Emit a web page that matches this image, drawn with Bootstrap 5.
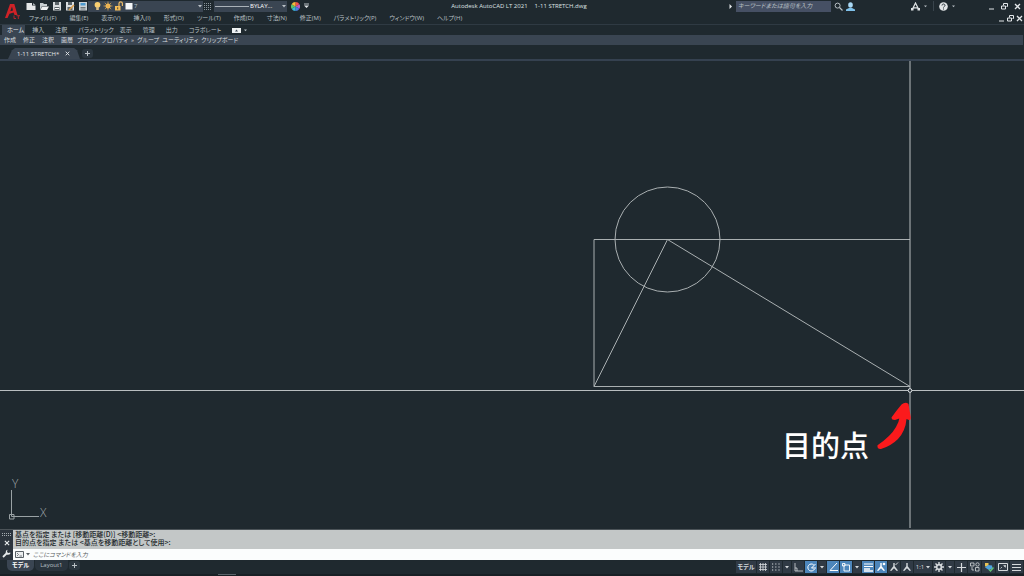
<!DOCTYPE html>
<html lang="ja">
<head>
<meta charset="utf-8">
<meta name="viewport" content="width=device-width, initial-scale=1">
<title>Autodesk AutoCAD LT 2021 - 1-11 STRETCH.dwg</title>
<link href="https://cdn.jsdelivr.net/npm/bootstrap@5.3.0/dist/css/bootstrap.min.css" rel="stylesheet">
<style>
:root{--bg:#1f292f;--panel:#3a4552;--txt:#b9c0c5;--hi:#e3e7ea;--blue:#4d86bb}
body{background:var(--bg);color:var(--txt);font:6px/8px "Open Sans","Noto Sans CJK JP",sans-serif;font-feature-settings:"palt";overflow-x:hidden}
button,input,select{font:inherit;font-feature-settings:inherit;color:inherit;border:0;background:none;padding:0;margin:0;white-space:nowrap}
a{color:inherit;text-decoration:none;white-space:nowrap}
svg{display:block;flex:none}
button{display:flex;align-items:center;justify-content:center}
.ln{fill:none;stroke:currentColor}
.gap-s{gap:3px}
.gap-xs{gap:1px}
.logo{width:24px}
.bar{height:12px}
.quick{padding-left:2px}
.menus{gap:13px;padding-left:5px}
.combo{background:var(--panel);height:11px;padding-left:1px}
.combo select{appearance:none;outline:0}
.pick-layer{width:63px}
.pick-type{width:31px}
.hatch{margin:0 2px 0 1px}
.doc-title{gap:7px;color:#dfe3e5}
.search{background:#465064;width:95px;height:11px;padding:0 2px;margin-left:3px;font-style:italic}
.search::placeholder,.cmd-in::placeholder{color:inherit;opacity:1}
.acct{padding:0 4px 0 3px}
.apps{gap:4px;padding-left:4px}
.win{gap:6px;padding:0 3px 0 33px;color:var(--hi)}
.win-doc{gap:2px;padding-right:1px;color:var(--hi)}
.rib{height:11px;gap:11px;border-top:1px solid #2f3a43;padding-left:2px}
.rib .home{background:var(--panel);color:var(--hi);padding:1px 1px 1px 5px;margin-right:-4px}
.rib .long{margin-right:-5px}
.pan{height:10px;gap:4px;background:var(--panel);color:#d3d8dc;padding-left:4px;margin-right:1px}
.pan .wide{gap:7px}
.files{height:14px}
.ftab{margin:3px 2px 0 8px;width:72px;height:11px;padding-left:9px;gap:6px;background:var(--panel);color:var(--hi);clip-path:polygon(0 100%,4px 20%,7px 0,66px 0,69px 20%,100% 100%)}
.plus{width:11px;height:9px;background:#2c3740;border-radius:3px}
.files .plus{margin-top:3px}
.rule{height:2px;background:#354150}
.stage{min-height:200px}
.stage svg{width:100%;height:100%}
.cmd{background:#2c343d;border-top:1px solid #4b5358}
.cmd-side{width:13px;color:#e8ebed;padding:3px 0 2px}
.hist{background:#c3c7c7;color:#22282b;font-size:7px;font-weight:500;line-height:8px;padding:0 2px 3px;font-family:"Noto Sans CJK JP",sans-serif}
.entry{background:#fbfdfd;color:#555c60;height:11px;padding-left:2px;gap:3px}
.cmd-in{font-style:italic;outline:0}
.recent{gap:2px}
.status{height:14px}
.layouts{padding:0 0 3px 7px;gap:1px}
.ltab{height:11px;line-height:11px;padding:0 5px;border-radius:0 0 5px 5px;background:#2a343d}
.ltab.act{background:var(--panel);color:#fff;font-weight:600}
.tray{gap:1px;padding-right:1px;color:#d5d9dc}
.tray button{width:12px;height:12px;background:#303a45}
.tray .car{width:8px}
.tray .wd{width:13px}
.tray .t18{width:18px;gap:2px}
.tray .t20{width:20px;font-weight:600}
.tray .on{background:var(--blue);color:#fff}
.foot{height:2px;background:#182025;padding-left:218px}
.foot i{display:block;width:18px;height:1px;background:#59636a}
</style>
</head>
<body>
<svg width="0" height="0" class="position-absolute" aria-hidden="true">
  <symbol id="car" viewBox="0 0 4 3"><path d="M0 0h4L2 2.6z" fill="currentColor"/></symbol>
  <symbol id="min" viewBox="0 0 7 7"><path class="ln" d="M1 6h5"/></symbol>
  <symbol id="rest" viewBox="0 0 7 7"><path class="ln" d="M2.500 2.500v-2h4v3h-1M.5 3h4v3h-4z"/></symbol>
  <symbol id="cls" viewBox="0 0 7 7"><path class="ln" stroke-width="1.300" d="M1 1l5 5M6 1L1 6"/></symbol>
  <symbol id="man" viewBox="0 0 10 10"><path d="M4.300 1h1.400v3.200L9 8.600 7.800 9 5 6.200 2.200 9 1 8.600l3.300-4.400z" fill="currentColor"/></symbol>
</svg>
<div class="d-flex flex-column min-vh-100">
<header>
  <div class="d-flex">
    <button class="logo" aria-label="アプリケーション メニュー"><svg width="20" height="22" viewBox="0 0 20 22"><path d="M3 17L8 3h4.300l3.200 11h-3L11.600 11.500 7.500 12.800 5.500 17zM8.300 10.300l2.700-.9L10 5.500z" fill="#cf2227"/><path d="M12 14.500v3h2M14.500 14.700h3.500M16.300 14.700V18" stroke="#b3262b" fill="none"/></svg></button>
    <div class="flex-grow-1">
      <div class="bar d-flex align-items-center">
        <div class="quick d-flex align-items-center gap-s">
          <button aria-label="新規"><svg width="10" height="10"><path d="M.5 2h5.500v2.500H9.500V9h-9z" fill="#e5e8e9"/><path d="M7 2l2.500 2H7z" fill="#aab1b5"/></svg></button>
          <button aria-label="開く"><svg width="10" height="10"><path d="M1 2h3l1 1h3v2H3L1 9z" fill="#c9cfd2"/><path d="M3 5.500h7L8 9H1.500z" fill="#f0f2f3"/></svg></button>
          <button aria-label="上書き保存"><svg width="10" height="10"><path d="M1 1h8v8.500H1z" fill="#d9dddf"/><path d="M3 1h4v3H3zM2.500 6h5v3h-5z" fill="#5b6469"/><path d="M3 7.500h4" stroke="#fff"/></svg></button>
          <button aria-label="名前を付けて保存"><svg width="10" height="10"><path d="M1 1h8v8.500H1z" fill="#d9dddf"/><path d="M3 1h4v3H3zM2.500 6h5v3h-5z" fill="#5b6469"/><path d="M4 9l5-5" stroke="#e0a04c" stroke-width="1.600"/></svg></button>
          <button aria-label="印刷"><svg width="10" height="10"><path d="M1 1h8v8.500H1z" fill="#cdd3d6"/><path d="M2.500 2h5v2.500h-5z" fill="#4e9bd0"/><path d="M2.500 6.500h5M2.500 8h5" stroke="#6d767b"/></svg></button>
        </div>
        <div class="combo d-flex align-items-center gap-xs" >
          <svg class="ms-1" width="9" height="10"><circle cx="4.500" cy="3.800" r="2.900" fill="#f9cf70"/><path d="M3.200 6h2.600v3H3.200z" fill="#d8bd86"/></svg>
          <svg width="10" height="10"><circle cx="5" cy="5" r="2.500" fill="#f6bf58"/><path d="M5 .5v9M.5 5h9M1.800 1.800l6.400 6.400M8.200 1.800L1.800 8.200" stroke="#e5ad52" stroke-width=".7"/></svg>
          <svg width="10" height="10"><path d="M1 5h5.500v4.500H1z" fill="#f4bd57"/><path d="M5 5V2.500a1.700 1.700 0 0 1 3.400 0V5" fill="none" stroke="#efbd66" stroke-width="1.200"/><path d="M3.700 6.300v2" stroke="#4b4a3f"/></svg>
          <svg width="8" height="8"><path d="M.5 1h7v6.500h-7z" fill="#f5f7f8"/></svg>
          <select class="pick-layer" aria-label="画層"><option>7</option></select>
          <svg width="5" height="3"><use href="#car" width="4" height="3"/></svg>
        </div>
        <svg class="hatch" width="8" height="9"><path d="M0 1.500h8M0 3.500h8M0 5.500h8M0 7.500h8" stroke="#89949b" stroke-dasharray="1 1"/></svg>
        <div class="combo d-flex align-items-center gap-xs">
          <svg width="34" height="3"><path d="M0 1.500h34" stroke="#aab2b8"/></svg>
          <select aria-label="線種" class="pick-type text-white"><option>BYLAY...</option></select>
          <svg width="5" height="3"><use href="#car" width="4" height="3"/></svg>
        </div>
        <button class="ms-1" aria-label="色"><svg width="9" height="9" viewBox="0 0 8 8"><path d="M4 4V0a4 4 0 0 1 3.500 2z" fill="#f0504b"/><path d="M4 4l3.500-2a4 4 0 0 1 0 4z" fill="#b45ac8"/><path d="M4 4l3.500 2A4 4 0 0 1 4 8z" fill="#4b7be0"/><path d="M4 4v4A4 4 0 0 1 .5 6z" fill="#37b7d8"/><path d="M4 4L.5 6a4 4 0 0 1 0-4z" fill="#59c26c"/><path d="M4 4L.5 2A4 4 0 0 1 4 0z" fill="#f5b83c"/></svg></button>
        <button class="ms-1" aria-label="カスタマイズ"><svg width="5" height="6" viewBox="0 0 5 6"><path d="M0 1h5" stroke="currentColor"/><path d="M0 2.500h5L2.500 5z" fill="#e3e7ea"/></svg></button>
        <div class="doc-title flex-grow-1 d-flex justify-content-center text-nowrap"><span>Autodesk AutoCAD LT 2021</span><span>1-11 STRETCH.dwg</span></div>
        <svg width="4" height="5"><path d="M.5 0L3 2.500.5 5z" fill="#e3e7ea"/></svg>
        <input class="search" placeholder="キーワードまたは語句を入力" aria-label="検索">
        <div class="acct d-flex align-items-center gap-s">
          <button aria-label="検索する"><svg width="9" height="9"><circle class="ln" cx="3.600" cy="3.600" r="2.500"/><path class="ln" d="M5.500 5.500l3 3" stroke-width="1.200"/></svg></button>
          <button aria-label="サインイン"><svg width="9" height="9"><ellipse cx="4.500" cy="3" rx="2.300" ry="2.800" fill="#a9d8f5"/><path d="M0 9V7.500l3-1.500h3l3 1.500V9z" fill="#7fc1ea"/></svg></button>
        </div>
        <div class="apps d-flex align-items-center ms-5">
          <button aria-label="App Store"><svg width="9" height="9"><path d="M1.500 7l3-6 3 6M2.500 5.800h4" fill="none" stroke="#dfe3e5" stroke-width="1.200"/><path d="M0 6h2.500v2.500H0zM6.500 6H9v2.500H6.500z" fill="#dfe3e5"/></svg></button>
          <svg width="3" height="3"><use href="#car" width="3" height="3"/></svg>
          <svg width="4" height="10"><path d="M2.500 0v10" stroke="#39444c"/></svg>
          <button aria-label="ヘルプ"><svg width="9" height="9"><circle cx="4.500" cy="4.500" r="4.300" fill="#e1e5e7"/><path d="M3 3.500c0-2 3-2 3 0 0 1-1.500 1-1.500 2M4.500 6.500v1" fill="none" stroke="#28323a"/></svg></button>
          <svg width="3" height="3"><use href="#car" width="3" height="3"/></svg>
        </div>
        <div class="win d-flex">
          <button aria-label="最小化"><svg width="7" height="7"><use href="#min"/></svg></button>
          <button aria-label="元に戻す"><svg width="7" height="7"><use href="#rest"/></svg></button>
          <button aria-label="閉じる"><svg width="7" height="7"><use href="#cls"/></svg></button>
        </div>
      </div>
      <div class="bar d-flex align-items-center">
        <nav class="menus d-flex">
          <a href="#">ファイル(F)</a><a href="#">編集(E)</a><a href="#">表示(V)</a><a href="#">挿入(I)</a><a href="#">形式(O)</a><a href="#">ツール(T)</a><a href="#">作成(D)</a><a href="#">寸法(N)</a><a href="#">修正(M)</a><a href="#">パラメトリック(P)</a><a href="#">ウィンドウ(W)</a><a href="#">ヘルプ(H)</a>
        </nav>
        <div class="win-doc d-flex ms-auto">
          <button aria-label="図面を最小化"><svg width="7" height="7"><use href="#min"/></svg></button>
          <button aria-label="図面を元に戻す"><svg width="7" height="7"><use href="#rest"/></svg></button>
          <button aria-label="図面を閉じる"><svg width="7" height="7"><use href="#cls"/></svg></button>
        </div>
      </div>
    </div>
  </div>
  <nav class="rib d-flex align-items-center">
    <a class="home" href="#">ホーム</a><a href="#">挿入</a><a href="#">注釈</a><a class="long" href="#">パラメトリック</a><a href="#">表示</a><a href="#">管理</a><a href="#">出力</a><a href="#">コラボレート</a>
    <button class="gap-s" aria-label="リボンを最小化"><svg width="9" height="5"><path d="M0 0h9v5H0z" fill="#eef1f2"/><path d="M3 3.500h3L4.500 1.500z" fill="#3a4552"/></svg><svg width="3" height="3"><use href="#car" width="3" height="3"/></svg></button>
  </nav>
  <div class="pan d-flex align-items-center">
    <div class="wide d-flex"><button>作成</button><button>修正</button><button>注釈</button><button>画層</button></div>
    <div class="d-flex gap-s"><button>ブロック</button><button class="gap-s">プロパティ<span>»</span></button><button>グループ</button><button>ユーティリティ</button><button>クリップボード</button></div>
  </div>
  <div class="files d-flex align-items-center">
    <a class="ftab d-flex align-items-center" href="#">1-11 STRETCH*<svg width="5" height="5" viewBox="0 0 7 7"><use href="#cls"/></svg></a>
    <button class="plus" aria-label="新しい図面"><svg width="5" height="5"><path class="ln" d="M2.500 0v5M0 2.500h5"/></svg></button>
  </div>
  <div class="rule"></div>
</header>

<main class="stage flex-grow-1 position-relative overflow-hidden">
  <svg class="position-absolute top-0 start-0" viewBox="0 61 1024 467" preserveAspectRatio="xMinYMin meet" role="img" aria-label="図面">
    <g fill="none" stroke="#a9afb1">
      <path d="M910 239.500H594V386.500H910" />
      <path d="M594 386.500L667.500 239.500 910 386.500"/>
      <circle cx="667.500" cy="239.500" r="52.500"/>
      <path d="M910 61V528M0 390.500H1024" stroke="#b9bec0"/>
      <circle cx="910" cy="390.500" r="1.800" fill="#1f292f" stroke="#e3e7ea"/>
    </g>
    <g fill="none" stroke="#9aa2a5"><path d="M11.500 490V516.500H39M9.500 514.500h4.500v4.500H9.500z"/></g>
    <g fill="#a4abae" font-family="Open Sans,sans-serif" font-size="12" font-weight="300"><text x="12" y="488">Y</text><text x="40" y="517">X</text></g>
    <path d="M877.500 445.300Q891 436 896 427 899 422 899.300 418.500L895 420Q891.500 420 891.500 417.500 896 411 901.500 404.500 905.500 401.500 908.500 404L910.800 417.500Q911 420.500 909 420L906.500 419Q905.500 431 898 439 891 446 881 449 877 449.500 877.500 445.300z" fill="#fb1a1c"/>
    <text x="782" y="457" fill="#fff" font-family="Noto Sans CJK JP,sans-serif" font-size="29" font-weight="500">目的点</text>
  </svg>
</main>

<footer>
  <div class="cmd d-flex">
    <div class="cmd-side d-flex flex-column align-items-center justify-content-between">
      <svg width="9" height="3"><path d="M0 .5h9M0 2.500h9" stroke="#a5acb1" stroke-dasharray="1 1"/></svg>
      <button aria-label="コマンドラインを閉じる"><svg width="6" height="6" viewBox="0 0 7 7"><use href="#cls"/></svg></button>
      <button aria-label="カスタマイズ"><svg width="9" height="9"><path d="M1 8l4-4" stroke="currentColor" stroke-width="1.800"/><path d="M5.500.8L5 3l1.200 1L8.300 3.500C9 5.500 6 6.500 4.500 5.200 3 3.500 4 1 5.500.8z" fill="currentColor"/></svg></button>
    </div>
    <div class="flex-grow-1">
      <div class="hist">基点を指定 または [移動距離(D)] &lt;移動距離&gt;:<br>目的点を指定 または &lt;基点を移動距離として使用&gt;:</div>
      <div class="entry d-flex align-items-center">
        <button class="recent" aria-label="最近使用したコマンド"><svg width="9" height="7"><path d="M.5.500h8v6h-8z" fill="#eceff0" stroke="#596167"/><path d="M2 2l1.500 1.500L2 5M4.500 5H7" fill="none" stroke="#596167" stroke-width=".8"/></svg><svg width="4" height="3"><use href="#car"/></svg></button>
        <input class="cmd-in flex-grow-1" placeholder="ここにコマンドを入力" aria-label="コマンド">
      </div>
    </div>
  </div>
  <div class="status d-flex align-items-center">
    <nav class="layouts d-flex align-items-center">
      <a class="ltab act" href="#">モデル</a><a class="ltab" href="#">Layout1</a>
      <button class="plus" aria-label="新しいレイアウト"><svg width="5" height="5"><path class="ln" d="M2.500 0v5M0 2.500h5"/></svg></button>
    </nav>
    <div class="tray d-flex ms-auto">
      <button class="t20">モデル</button>
      <button aria-label="グリッド"><svg width="8" height="8"><path class="ln" d="M1.500 0v8M4 0v8M6.500 0v8M0 1.500h8M0 4h8M0 6.500h8" stroke-width=".8"/></svg></button>
      <button aria-label="スナップ"><svg width="8" height="8"><path class="ln" d="M0 1h8M0 4h8M0 7h8" stroke-width="1.200" stroke-dasharray="1.200 2"/></svg></button>
      <button class="car" aria-label="スナップ設定"><svg width="4" height="3"><use href="#car"/></svg></button>
      <button aria-label="直交モード"><svg width="9" height="9"><path class="ln" d="M1 0v8h8M1 5h2v3" stroke-width=".8"/></svg></button>
      <button class="on" aria-label="極トラッキング"><svg width="9" height="9"><path class="ln" d="M7.500 6A3.500 3.500 0 1 1 6.800 2M4.500 5l4-4M4.500 5H9"/></svg></button>
      <button class="car" aria-label="極設定"><svg width="4" height="3"><use href="#car"/></svg></button>
      <button class="on" aria-label="オブジェクト スナップ トラッキング"><svg width="9" height="9"><path class="ln" d="M8 0L1 7.500h8"/></svg></button>
      <button class="on" aria-label="オブジェクト スナップ"><svg width="9" height="9"><path class="ln" d="M2 2h5.500v6H2z" stroke-width=".9"/><path class="ln" d="M.5.500h2.500v2.500H.5z" stroke-width=".9"/></svg></button>
      <button class="car" aria-label="スナップ点"><svg width="4" height="3"><use href="#car"/></svg></button>
      <button class="on" aria-label="線の太さ"><svg width="9" height="9"><path class="ln" d="M0 1h9M0 3.500h9" /><path class="ln" d="M0 6h6M0 8h9" stroke-width="1.400"/></svg></button>
      <button class="on" aria-label="注釈オブジェクト"><svg width="10" height="10"><use href="#man"/><circle cx="8" cy="2" r="1.300" fill="currentColor"/></svg></button>
      <button aria-label="尺度を追加"><svg width="10" height="10"><use href="#man"/><path class="ln" d="M6.500 3L9 .5"/></svg></button>
      <button aria-label="注釈尺度"><svg width="10" height="10"><use href="#man"/></svg></button>
      <button class="t18">1:1<svg width="4" height="3"><use href="#car"/></svg></button>
      <button aria-label="ワークスペース"><svg width="10" height="10"><circle class="ln" cx="5" cy="5" r="2.400" stroke-width="1.700"/><path class="ln" d="M5 0v2M5 8v2M0 5h2M8 5h2M1.500 1.500L3 3M7 7l1.500 1.500M8.500 1.500L7 3M3 7L1.500 8.500" stroke-width="1.400"/></svg></button>
      <button class="car" aria-label="ワークスペース一覧"><svg width="4" height="3"><use href="#car"/></svg></button>
      <button aria-label="注釈モニター"><svg width="9" height="9"><path class="ln" d="M4.500 0v9M0 4.500h9" stroke-width="1.200"/></svg></button>
      <button class="wd" aria-label="選択表示"><svg width="10" height="10"><path class="ln" d="M.5 1h3.500v3H.5zM5.500 5.500H9v3.500H5.500z" stroke-width=".8"/><circle class="ln" cx="7.500" cy="2.500" r="1.700" stroke-width=".8"/><path class="ln" d="M2 5v3h2" stroke-width=".8"/></svg></button>
      <button class="wd" aria-label="グラフィックス"><svg width="10" height="10"><path d="M1 1h3.500v3.500H1z" fill="#e9c353"/><path d="M4 3l4 .5.500 3L5 8 1 5.500z" fill="#4fa3df"/><path d="M5 7.500l1.500 1.500L9.500 5.500" fill="none" stroke="#63c274" stroke-width="1.400"/></svg></button>
      <button class="wd" aria-label="フルスクリーン"><svg width="10" height="8"><path class="ln" d="M.5.500h9v7h-9z"/><path class="ln" d="M2.500 5.500L4 4M6 4l1.500-1.500M5.500 2.500h2v2" stroke-width=".8"/></svg></button>
      <button class="wd" aria-label="カスタマイズ"><svg width="9" height="9"><path class="ln" d="M0 1.500h9M0 4.500h9M0 7.500h9" stroke-width="1.200"/></svg></button>
    </div>
  </div>
  <div class="foot"><i></i></div>
</footer>
</div>
<script src="https://cdn.jsdelivr.net/npm/bootstrap@5.3.0/dist/js/bootstrap.bundle.min.js"></script>
</body>
</html>
